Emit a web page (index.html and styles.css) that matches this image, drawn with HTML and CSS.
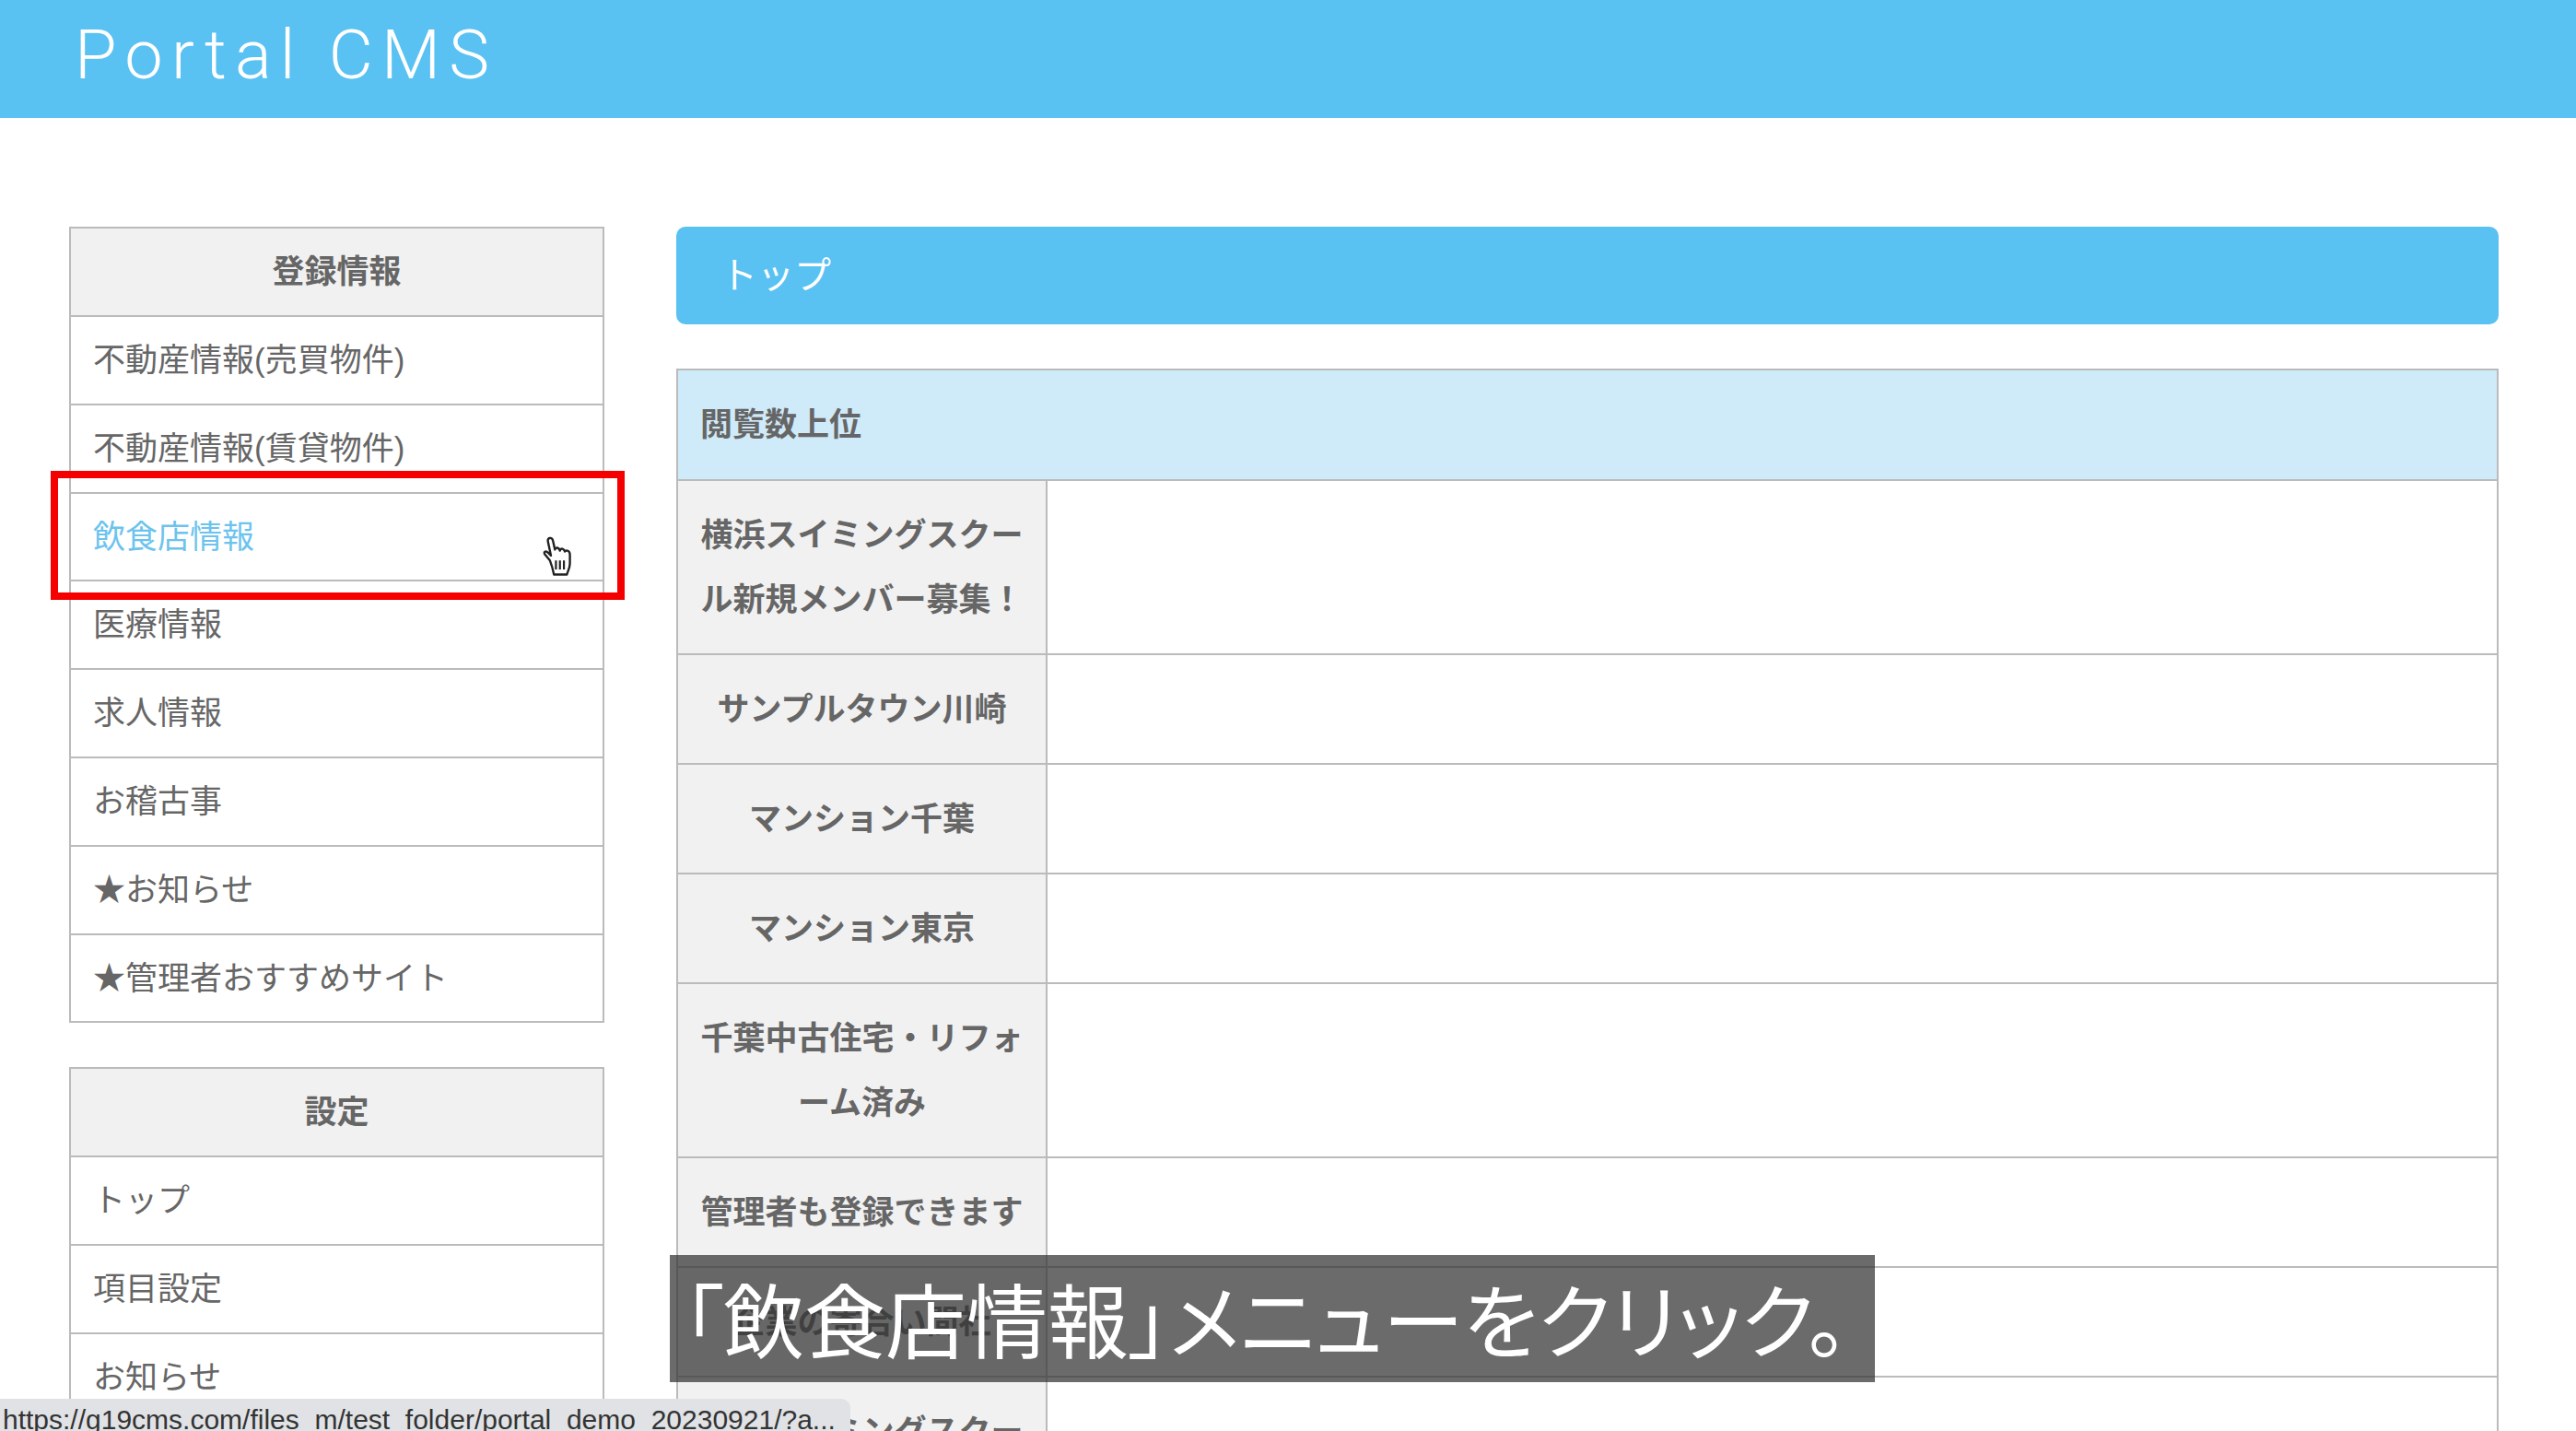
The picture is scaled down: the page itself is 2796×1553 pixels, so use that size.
FILE: index.html
```html
<!DOCTYPE html>
<html>
<head>
    <title>Portal CMS</title>
    <link rel="stylesheet" href="styles.css">
</head>
<body>
    <div class="header">
        <h1>Portal CMS</h1>
    </div>

    <div class="container">
        <div class="sidebar">
            <div class="menu">
                <h3>登録情報</h3>
                <a href="#">不動産情報(売買物件)</a>
                <a href="#">不動産情報(賃貸物件)</a>
                <a href="#" class="hover">飲食店情報</a>
                <a href="#">医療情報</a>
                <a href="#">求人情報</a>
                <a href="#">お稽古事</a>
                <a href="#">★お知らせ</a>
                <a href="#">★管理者おすすめサイト</a>
            </div>
            <div class="menu">
                <h3>設定</h3>
                <a href="#">トップ</a>
                <a href="#">項目設定</a>
                <a href="#">お知らせ</a>
            </div>
        </div>

        <div class="main">
            <h2>トップ</h2>
            <table>
                <colgroup>
                    <col class="col-name">
                    <col>
                </colgroup>
                <tr><th colspan="2" class="table-title">閲覧数上位</th></tr>
                <tr><th>横浜スイミングスクール新規メンバー募集！</th><td></td></tr>
                <tr><th>サンプルタウン川崎</th><td></td></tr>
                <tr><th>マンション千葉</th><td></td></tr>
                <tr><th>マンション東京</th><td></td></tr>
                <tr><th>千葉中古住宅・リフォーム済み</th><td></td></tr>
                <tr><th>管理者も登録できます</th><td></td></tr>
                <tr><th>企業の寄合い間社</th><td></td></tr>
                <tr><th>横浜スイミングスクール新規メンバー募集！</th><td></td></tr>
            </table>
        </div>
    </div>

    <!-- video overlays -->
    <div class="highlight"></div>
    <svg class="cursor" viewBox="0 0 36 40" width="39" height="44">
        <path d="M11 24 L6 18 C4 15 7 14 9 16 L12 19 L9 5 C8 1 13 0 14 4 L16 13 C17 10 20 11 21 14 C22 11 25 12 26 15 C27 13 31 14 31 18 L31 27 C31 32 29 34 28 38 L15 38 C14 33 13 29 11 24 Z" fill="#fff" stroke="#222" stroke-width="2.2" stroke-linejoin="round"/>
        <path d="M17 24 V33 M21 24 V33 M25 24 V33" stroke="#222" stroke-width="2" fill="none"/>
    </svg>
    <div class="caption">「飲食店情報」メニューをクリック。</div>
    <div class="status">https://g19cms.com/files_m/test_folder/portal_demo_20230921/?a...</div>
</body>
</html>
```

FILE: styles.css
```css
html, body {
    height: 1553px;
    overflow: hidden;
}
body {
    font-family: "Liberation Sans", "Noto Sans CJK JP", sans-serif;
    margin: 0;
    padding: 0;
    background: #fff;
    color: #666;
    font-size: 35px;
}
.header {
    background: #5ac1f3;
    height: 128px;
    padding-left: 81px;
    box-sizing: border-box;
}
.header h1 {
    margin: 0;
    font-family: Roboto, sans-serif;
    font-weight: 300;
    font-size: 74px;
    letter-spacing: 9.2px;
    line-height: 120px;
    color: #fff;
}
.container {
    display: flex;
    gap: 78px;
    padding: 118px 84px 0 75px;
    align-items: flex-start;
}
.sidebar {
    width: 581px;
    flex: none;
}
.menu {
    border: 2px solid #bbb;
    border-bottom: 0;
    margin-bottom: 48px;
}
.menu h3 {
    margin: 0;
    background: #f1f1f1;
    text-align: center;
    font-size: 35px;
    line-height: 94px;
    border-bottom: 2px solid #bbb;
}
.menu a {
    display: block;
    padding-left: 24px;
    line-height: 93.8px;
    color: #666;
    text-decoration: none;
    border-bottom: 2px solid #bbb;
}
.menu a.hover {
    color: #6cc3ee;
}
.main {
    flex: 1;
}
.main h2 {
    margin: 0 0 48px;
    height: 106px;
    background: #5ac1f3;
    border-radius: 10px;
    color: #fff;
    font-size: 40px;
    font-weight: 400;
    line-height: 106px;
    padding-left: 48px;
}
table {
    width: 100%;
    table-layout: fixed;
    border-collapse: collapse;
}
.col-name {
    width: 401px;
}
th, td {
    border: 2px solid #bbb;
}
th {
    background: #f1f1f1;
    padding: 24px 24px 23px;
    line-height: 70px;
    font-weight: 700;
    text-align: center;
}
th.table-title {
    background: #cfeaf9;
    text-align: left;
    padding: 24px;
}
td {
    background: #fff;
}
.highlight {
    position: absolute;
    left: 55px;
    top: 511px;
    width: 607px;
    height: 124px;
    border: 8px solid #f40000;
}
.cursor {
    position: absolute;
    left: 585px;
    top: 582px;
}
.caption {
    position: absolute;
    left: 727px;
    top: 1362px;
    width: 1308px;
    height: 138px;
    box-sizing: border-box;
    padding-left: 14px;
    background: rgba(50, 50, 50, 0.72);
    color: #fff;
    font-family: "Noto Sans CJK JP", sans-serif;
    font-size: 88px;
    font-feature-settings: "palt";
    line-height: 134px;
    white-space: nowrap;
}
.status {
    position: absolute;
    left: 0;
    top: 1518px;
    width: 923px;
    height: 35px;
    box-sizing: border-box;
    background: #e0e2e5;
    border-top-right-radius: 10px;
    color: #333;
    font-size: 30px;
    line-height: 46px;
    padding-left: 3px;
    white-space: nowrap;
    overflow: hidden;
}
```
